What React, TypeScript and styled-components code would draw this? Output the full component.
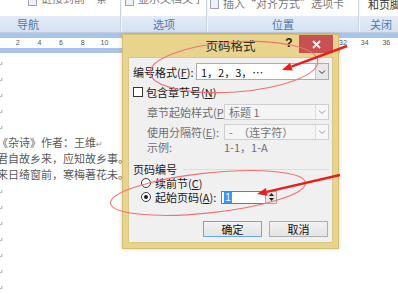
import React from "react";
import styled, { createGlobalStyle } from "styled-components";

const GlobalStyle = createGlobalStyle`
  html, body {
    margin: 0;
    padding: 0;
    background: #fff;
  }
  body {
    font-family: "Noto Sans CJK SC", "Noto Sans", sans-serif;
  }
`;

const Page = styled.div`
  position: relative;
  width: 398px;
  height: 294px;
  overflow: hidden;
  background: #fff;
  display: flex;
  flex-direction: column;
`;

/* ---------- ribbon ---------- */

const Ribbon = styled.div`
  display: flex;
  flex-shrink: 0;
  margin-left: -64px;
  height: 32px;
  border-bottom: 1px solid #c3cfdf;
`;

const Group = styled.div<{ $w: number }>`
  width: ${(p) => p.$w}px;
  flex-shrink: 0;
  display: flex;
  flex-direction: column;
`;

const GroupBody = styled.div<{ $pad: number }>`
  height: 16px;
  overflow: hidden;
  background: #fff;
  display: flex;
  align-items: flex-start;
  gap: 4px;
  padding-left: ${(p) => p.$pad}px;
  font-size: 11px;
  line-height: 14px;
  white-space: nowrap;
`;

const CutText = styled.span<{ $shift: number; $dark?: boolean }>`
  margin-top: ${(p) => p.$shift}px;
  color: ${(p) => (p.$dark ? "#333" : "#7a7a7a")};
`;

const CutIcon = styled.span<{ $shift: number }>`
  width: 7px;
  height: 8px;
  margin-top: ${(p) => p.$shift}px;
  border: 1px solid #9aa6b4;
  background: #eef2f7;
`;

const GroupLabel = styled.div`
  height: 16px;
  background: linear-gradient(#e3ecf7, #d5e2f2);
  color: #5077ab;
  font-size: 11px;
  line-height: 16px;
  text-align: center;
`;

const GroupSep = styled.div`
  width: 2px;
  flex-shrink: 0;
  background: linear-gradient(90deg, #c9d4e3 50%, #f4f7fb 50%);
`;

/* ---------- ruler ---------- */

const Ruler = styled.div`
  flex-shrink: 0;
  display: flex;
  flex-direction: column;
`;

const RulerStrip = styled.div<{ $w?: number }>`
  height: 5px;
  width: ${(p) => (p.$w ? `${p.$w}px` : "100%")};
  background: #a9c6ea;
`;

const RulerScale = styled.div`
  height: 10px;
  display: flex;
  padding-left: 6.85px;
  background: #fff;
`;

const RulerNum = styled.span`
  width: 21.7px;
  flex-shrink: 0;
  text-align: center;
  font-family: "Liberation Sans", sans-serif;
  font-size: 7px;
  line-height: 10px;
  color: #555;
`;

/* ---------- document ---------- */

const Doc = styled.div`
  padding-top: 0.5px;
  margin-left: -3px;
  font-size: 11px;
  line-height: 16px;
  color: #5a5a5a;
  white-space: nowrap;
`;

const DocLine = styled.div`
  height: 16px;
`;

const Mark = styled.span`
  font-family: "DejaVu Sans", sans-serif;
  font-size: 8px;
  color: #8a8a8a;
`;

/* ---------- dialog ---------- */

const Dialog = styled.div`
  position: absolute;
  left: 122px;
  top: 34px;
  width: 217px;
  height: 215px;
  box-sizing: border-box;
  background: #e9d48d;
  border: 1px solid #d3bd70;
  padding: 0 5px 5px;
  display: flex;
  flex-direction: column;
  box-shadow: 0 0 4px rgba(0, 0, 0, 0.18);
`;

const TitleBar = styled.div`
  height: 22px;
  flex-shrink: 0;
  display: flex;
  align-items: flex-start;
`;

const TitleSpacer = styled.div`
  width: 53px;
  flex-shrink: 0;
`;

const Title = styled.div`
  flex: 1;
  text-align: center;
  font-size: 12.5px;
  line-height: 22px;
  color: #2a2a2a;
`;

const TitleControls = styled.div`
  width: 53px;
  flex-shrink: 0;
  display: flex;
  gap: 1px;
`;

const HelpButton = styled.div`
  width: 18px;
  height: 18px;
  font-family: "Liberation Sans", sans-serif;
  font-weight: bold;
  font-size: 12px;
  line-height: 16px;
  text-align: center;
  color: #222;
`;

const CloseButton = styled.div`
  width: 34px;
  height: 18px;
  background: #c75050;
  display: flex;
  align-items: center;
  justify-content: center;
`;

const Client = styled.div`
  flex: 1;
  box-sizing: border-box;
  background: #f0f0f0;
  border: 1px solid #d8c887;
  padding: 0 3px 0 4px;
  display: flex;
  flex-direction: column;
  font-size: 11px;
  color: #1a1a1a;
  white-space: nowrap;
`;

const Row = styled.div<{ $top: number; $h: number; $indent?: number }>`
  margin-top: ${(p) => p.$top}px;
  height: ${(p) => p.$h}px;
  padding-left: ${(p) => p.$indent ?? 0}px;
  display: flex;
  align-items: center;
  flex-shrink: 0;
`;

const Label = styled.span<{ $w?: number; $disabled?: boolean }>`
  width: ${(p) => (p.$w ? `${p.$w}px` : "auto")};
  flex-shrink: 0;
  color: ${(p) => (p.$disabled ? "#6e6e6e" : "#1a1a1a")};
  line-height: 14px;
`;

const Select = styled.div<{ $w: number; $disabled?: boolean }>`
  width: ${(p) => p.$w}px;
  height: 100%;
  box-sizing: border-box;
  border: 1px solid ${(p) => (p.$disabled ? "#d0d0d0" : "#acacac")};
  background: ${(p) => (p.$disabled ? "#f5f5f5" : "#fff")};
  color: ${(p) => (p.$disabled ? "#737373" : "#111")};
  display: flex;
  align-items: center;
`;

const SelectValue = styled.span`
  flex: 1;
  padding-left: 4px;
  line-height: 14px;
`;

const SelectArrow = styled.span<{ $disabled?: boolean }>`
  width: 13px;
  height: 100%;
  box-sizing: border-box;
  border-left: 1px solid ${(p) => (p.$disabled ? "#dcdcdc" : "#c4c4c4")};
  background: ${(p) => (p.$disabled ? "#f7f7f7" : "#e8e8e8")};
  display: flex;
  align-items: center;
  justify-content: center;
`;

const Checkbox = styled.span`
  width: 10px;
  height: 10px;
  box-sizing: border-box;
  border: 1px solid #333;
  background: #fff;
  margin-right: 3px;
  flex-shrink: 0;
`;

const Radio = styled.span<{ $checked?: boolean }>`
  width: 10px;
  height: 10px;
  box-sizing: border-box;
  border-radius: 50%;
  border: 1px solid #3a3a3a;
  background: #fff;
  margin: 0 4px 0 8px;
  flex-shrink: 0;
  display: flex;
  align-items: center;
  justify-content: center;

  &::after {
    content: "";
    display: ${(p) => (p.$checked ? "block" : "none")};
    width: 4px;
    height: 4px;
    border-radius: 50%;
    background: #1a1a1a;
  }
`;

const SectionRule = styled.span`
  flex: 1;
  height: 1px;
  margin: 0 0 0 6px;
  background: #dcdcdc;
`;

const NumberInput = styled.div`
  width: 44px;
  height: 13px;
  box-sizing: border-box;
  border: 1px solid #7a7a7a;
  border-right: none;
  background: #fff;
  margin-left: 5px;
  display: flex;
  align-items: center;
  padding-left: 2px;
`;

const Selected = styled.span`
  background: #3399ff;
  color: #fff;
  font-family: "Liberation Sans", sans-serif;
  font-size: 10px;
  line-height: 11px;
  padding: 0 1px;
`;

const Spinner = styled.div`
  width: 12px;
  height: 13px;
  box-sizing: border-box;
  border: 1px solid #acacac;
  background: #e6e6e6;
  display: flex;
  flex-direction: column;
  align-items: center;
  justify-content: space-around;
`;

const ButtonRow = styled.div`
  margin-top: 17px;
  height: 16px;
  display: flex;
  justify-content: flex-end;
  gap: 7px;
  padding-right: 1px;
`;

const Button = styled.button<{ $primary?: boolean }>`
  width: 59px;
  height: 16px;
  box-sizing: border-box;
  padding: 0;
  border: 1px solid ${(p) => (p.$primary ? "#6aa6e3" : "#adadad")};
  background: linear-gradient(#f2f2f2, #e4e4e4);
  font-family: "Noto Sans CJK SC", sans-serif;
  font-size: 11px;
  line-height: 14px;
  color: #111;
`;

/* ---------- annotations ---------- */

const Overlay = styled.svg`
  position: absolute;
  left: 0;
  top: 0;
  width: 398px;
  height: 294px;
  pointer-events: none;
`;

const Chevron = ({ color }: { color: string }) => (
  <svg width="8" height="6" viewBox="0 0 8 6">
    <path d="M1 1.5 L4 4.5 L7 1.5" fill="none" stroke={color} strokeWidth="1" />
  </svg>
);

const leftNums = Array.from({ length: 18 }, (_, i) => String((i + 1) * 2));

export default function App() {
  return (
    <>
      <GlobalStyle />
      <Page>
        <Ribbon>
          <Group $w={184}>
            <GroupBody $pad={92}>
              <CutIcon $shift={-4} />
              <CutText $shift={-9}>链接到前一条</CutText>
            </GroupBody>
            <GroupLabel>导航</GroupLabel>
          </Group>
          <GroupSep />
          <Group $w={84}>
            <GroupBody $pad={3}>
              <CutIcon $shift={-4} />
              <CutText $shift={-9}>显示文档文字</CutText>
            </GroupBody>
            <GroupLabel>选项</GroupLabel>
          </Group>
          <GroupSep />
          <Group $w={150}>
            <GroupBody $pad={2}>
              <CutIcon $shift={-1} />
              <CutText $shift={-4}>插入“对齐方式”选项卡</CutText>
            </GroupBody>
            <GroupLabel>位置</GroupLabel>
          </Group>
          <GroupSep />
          <Group $w={42}>
            <GroupBody $pad={8}>
              <CutText $shift={-3} $dark>
                和页脚
              </CutText>
            </GroupBody>
            <GroupLabel>关闭</GroupLabel>
          </Group>
        </Ribbon>

        <Ruler>
          <RulerStrip />
          <RulerScale>
            {leftNums.map((n) => (
              <RulerNum key={n}>{n}</RulerNum>
            ))}
          </RulerScale>
          <RulerStrip $w={340} />
        </Ruler>

        <Doc>
          {[0, 1, 2, 3, 4].map((i) => (
            <DocLine key={`a${i}`}>
              <Mark>↵</Mark>
            </DocLine>
          ))}
          <DocLine>
            《杂诗》作者：王维<Mark>↵</Mark>
          </DocLine>
          <DocLine>君自故乡来，应知故乡事。</DocLine>
          <DocLine>来日绮窗前，寒梅著花未。</DocLine>
          {[0, 1, 2, 3, 4, 5, 6].map((i) => (
            <DocLine key={`b${i}`}>
              <Mark>↵</Mark>
            </DocLine>
          ))}
        </Doc>

        <Dialog>
          <TitleBar>
            <TitleSpacer />
            <Title>页码格式</Title>
            <TitleControls>
              <HelpButton>?</HelpButton>
              <CloseButton>
                <svg width="9" height="9" viewBox="0 0 9 9">
                  <path d="M1 1 L8 8 M8 1 L1 8" stroke="#fff" strokeWidth="1.8" />
                </svg>
              </CloseButton>
            </TitleControls>
          </TitleBar>

          <Client>
            <Row $top={5} $h={17}>
              <Label $w={63}>
                编号格式(<u>F</u>):
              </Label>
              <Select $w={135}>
                <SelectValue>1，2，3，…</SelectValue>
                <SelectArrow>
                  <Chevron color="#333" />
                </SelectArrow>
              </Select>
            </Row>

            <Row $top={7} $h={10}>
              <Checkbox />
              <Label>
                包含章节号(<u>N</u>)
              </Label>
            </Row>

            <Row $top={7} $h={16} $indent={14}>
              <Label $w={77} $disabled>
                章节起始样式(<u>P</u>)
              </Label>
              <Select $w={105} $disabled>
                <SelectValue>标题 1</SelectValue>
                <SelectArrow $disabled>
                  <Chevron color="#9a9a9a" />
                </SelectArrow>
              </Select>
            </Row>

            <Row $top={4} $h={16} $indent={14}>
              <Label $w={77} $disabled>
                使用分隔符(<u>E</u>):
              </Label>
              <Select $w={105} $disabled>
                <SelectValue>-　（连字符）</SelectValue>
                <SelectArrow $disabled>
                  <Chevron color="#9a9a9a" />
                </SelectArrow>
              </Select>
            </Row>

            <Row $top={0} $h={14} $indent={14}>
              <Label $w={77} $disabled>
                示例:
              </Label>
              <Label $disabled>1-1，1-A</Label>
            </Row>

            <Row $top={8} $h={14}>
              <Label>页码编号</Label>
              <SectionRule />
            </Row>

            <Row $top={0} $h={14}>
              <Radio />
              <Label>
                续前节(<u>C</u>)
              </Label>
            </Row>

            <Row $top={0} $h={14}>
              <Radio $checked />
              <Label>
                起始页码(<u>A</u>):
              </Label>
              <NumberInput>
                <Selected>1</Selected>
              </NumberInput>
              <Spinner>
                <svg width="5" height="3" viewBox="0 0 5 3">
                  <path d="M0 3 L2.5 0 L5 3 Z" fill="#222" />
                </svg>
                <svg width="5" height="3" viewBox="0 0 5 3">
                  <path d="M0 0 L2.5 3 L5 0 Z" fill="#222" />
                </svg>
              </Spinner>
            </Row>

            <ButtonRow>
              <Button $primary>确定</Button>
              <Button>取消</Button>
            </ButtonRow>
          </Client>
        </Dialog>

        <Overlay viewBox="0 0 398 294">
          <ellipse
            cx="234"
            cy="67"
            rx="84"
            ry="25"
            transform="rotate(-4 234 67)"
            fill="none"
            stroke="#f07272"
            strokeWidth="1.1"
          />
          <ellipse
            cx="208"
            cy="193"
            rx="98"
            ry="20"
            transform="rotate(-6 208 193)"
            fill="none"
            stroke="#f07272"
            strokeWidth="1.1"
          />
          <line x1="347" y1="46" x2="291.4" y2="66.6" stroke="#e8201a" strokeWidth="2.4" />
          <polygon points="282,70 292.8,70.4 290,62.8" fill="#e8201a" />
          <line x1="340" y1="175" x2="266.7" y2="191.8" stroke="#e8201a" strokeWidth="2.4" />
          <polygon points="257,194 267.6,195.7 265.9,187.9" fill="#e8201a" />
        </Overlay>
      </Page>
    </>
  );
}
